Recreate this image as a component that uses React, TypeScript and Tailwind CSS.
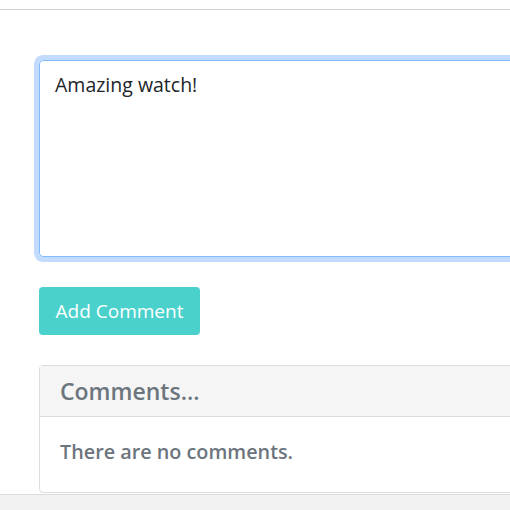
export default function App() {
  return (
    <div className="h-[510px] w-[510px] overflow-hidden bg-white font-['Open_Sans','Noto_Sans',sans-serif]">
      <div className="h-[10px] border-b border-[#cfcfcf]" />
      <div className="w-[640px] pl-[39px] pt-[50px]">
        <textarea
          defaultValue="Amazing watch!"
          className="block h-[197px] w-full resize-none rounded-[4px] border border-[#80bdff] px-[15px] py-[9px] text-[19.5px] leading-[30px] text-[#212529] shadow-[0_0_0_5px_#c3dbfd] outline-none"
        />
        <button className="mt-[30px] h-[48px] w-[161px] rounded-[4px] bg-[#4bd1cb] text-[19px] text-white">
          Add Comment
        </button>
        <div className="mt-[30px] rounded-[4px] border border-[#dddddd]">
          <div className="flex h-[51px] items-center border-b border-[#dddddd] bg-[#f5f5f5] px-[20px]">
            <h3 className="text-[23px] font-semibold text-[#6c757d]">Comments...</h3>
          </div>
          <div className="flex h-[75px] items-center px-[20px] pb-[6px]">
            <p className="text-[19.8px] font-semibold text-[#6c757d]">There are no comments.</p>
          </div>
        </div>
      </div>
      <div className="mt-[1px] h-[40px] border-t border-[#dddddd] bg-[#f2f2f2]" />
    </div>
  );
}
